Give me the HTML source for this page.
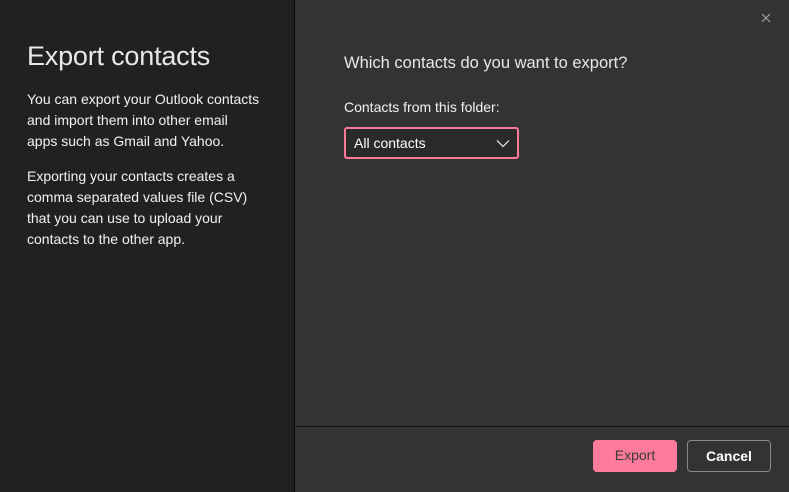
<!DOCTYPE html>
<html><head><meta charset="utf-8"><style>
*{margin:0;padding:0;box-sizing:border-box}
body{width:789px;height:492px;overflow:hidden;background:#333;font-family:"Segoe UI","Liberation Sans",sans-serif;position:relative;color:#fff}
.left{position:absolute;left:0;top:0;width:295px;height:492px;background:#212121;border-right:1px solid #0a0a0a}
h1{position:absolute;left:27px;top:41px;font-size:27px;font-weight:300;color:#e8e8e8;letter-spacing:-0.2px}
.p{position:absolute;left:27px;font-size:14px;line-height:21px;color:#f2f2f2}
.q{position:absolute;left:344px;top:54px;font-size:16.5px;color:#e8e8e8}
.lab{position:absolute;left:344px;top:99px;font-size:14px;color:#f2f2f2}
.sel{position:absolute;left:344px;top:127px;width:175px;height:32px;border:2px solid #ff7a98;border-radius:3px;background:#2a2a2a;font-size:14px;padding:6px 0 0 8px}
.sel svg{position:absolute;right:7px;top:10px}
.x{position:absolute;left:761px;top:13px}
.hr{position:absolute;left:296px;top:426px;width:493px;height:1px;background:#111}
.btn{position:absolute;top:440px;width:84px;height:32px;border-radius:4px;font-size:14px;text-align:center;line-height:31px}
.exp{left:593px;background:#ff7b9c;color:#3a3a3a}
.can{left:687px;border:1px solid #8a8a8a;color:#fff;font-weight:bold}
</style></head><body>
<div class="left">
<h1>Export contacts</h1>
<div class="p" style="top:89px">You can export your Outlook contacts<br>and import them into other email<br>apps such as Gmail and Yahoo.</div>
<div class="p" style="top:166px">Exporting your contacts creates a<br>comma separated values file (CSV)<br>that you can use to upload your<br>contacts to the other app.</div>
</div>
<svg class="x" width="10" height="10" viewBox="0 0 10 10"><path d="M1 1l8 8M9 1l-8 8" stroke="#aaa" stroke-width="1"/></svg>
<div class="q">Which contacts do you want to export?</div>
<div class="lab">Contacts from this folder:</div>
<div class="sel">All contacts<svg width="14" height="9" viewBox="0 0 14 9"><path d="M1 1.5l6 6 6-6" fill="none" stroke="#ddd" stroke-width="1.3"/></svg></div>
<div class="hr"></div>
<div class="btn exp">Export</div>
<div class="btn can">Cancel</div>
</body></html>
